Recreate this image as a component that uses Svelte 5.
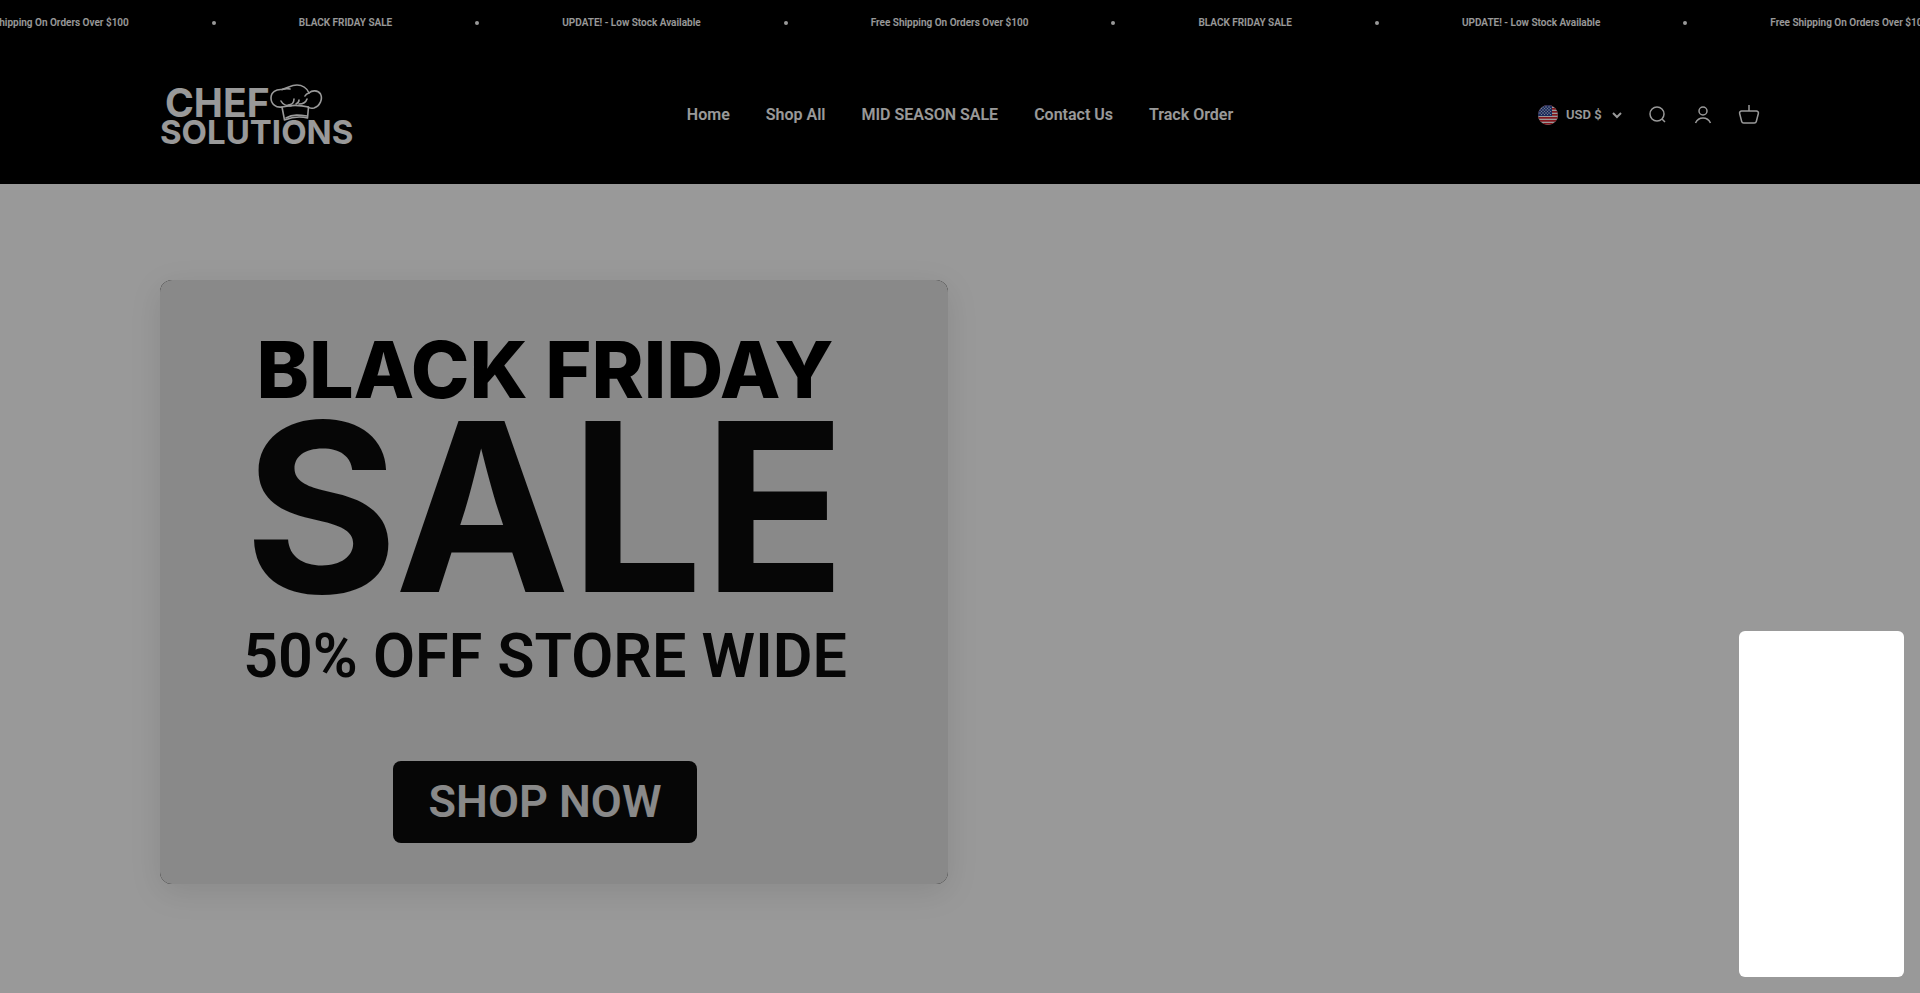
<script lang="ts">
    const announcements = [
        "Free Shipping On Orders Over $100",
        "BLACK FRIDAY SALE",
        "UPDATE! - Low Stock Available",
    ];

    const ticker = [...announcements, ...announcements, ...announcements];

    const links = [
        { label: "Home", href: "#home" },
        { label: "Shop All", href: "#shop-all" },
        { label: "MID SEASON SALE", href: "#mid-season-sale" },
        { label: "Contact Us", href: "#contact" },
        { label: "Track Order", href: "#track-order" },
    ];

    let scrolled = $state(29);
</script>

<div class="page">
    <div class="announcement-bar">
        <div class="track" style:transform={`translateX(-${scrolled}px)`}>
            {#each ticker as message}
                <span class="message">{message}</span>
                <span class="dot"></span>
            {/each}
        </div>
    </div>

    <header class="header">
        <div class="header-inner">
            <a class="logo" href="#home" aria-label="Chef Solutions">
                <svg width="194" height="62" viewBox="0 0 194 62">
                    <text class="logo-chef" x="5" y="33">CHEF</text>
                    <text class="logo-solutions" x="0" y="60">SOLUTIONS</text>
                    <g class="hat">
                        <path d="M122 23C116 24 111 20 111 14C111 8 116 5 122 5.500C128 4 131 1 137 1C142 1 147 4 149 9C152 6 158 6 160.500 10C163 15 160 22 154 24C151 24.500 149 24 148 23" />
                        <path d="M122 5.500C125 4.500 128 4.500 130 5M149 9C147 9.500 146 10 145 12" />
                        <path d="M121 17C123 21 127 22 131 22M134 15C134 18 132 21 128 21M139 20C143 20 146 18 147 15M136 20C138 19 139 18 139 16" />
                        <path d="M122 23L124.500 36C132 33 140 32 147.500 34L148.500 23C140 21 130 21 122 23Z" />
                        <path d="M126 34C133 30 140 31 147 32" />
                    </g>
                </svg>
            </a>

            <nav class="nav">
                {#each links as link}
                    <a href={link.href}>{link.label}</a>
                {/each}
            </nav>

            <div class="tools">
                <label class="currency">
                    <svg width="20" height="20" viewBox="0 0 20 20" aria-hidden="true">
                        <clipPath id="flag-clip"><circle cx="10" cy="10" r="10" /></clipPath>
                        <g clip-path="url(#flag-clip)">
                            <rect width="20" height="20" fill="#fff" />
                            {#each [0, 3, 6, 9, 12, 15, 18] as y}
                                <rect {y} width="20" height="1.700" fill="#d8242f" />
                            {/each}
                            <rect width="14" height="11" fill="#2c4a9e" />
                            {#each [2, 5, 8] as y}
                                {#each [2, 5, 8, 11] as x}
                                    <circle cx={x} cy={y} r=".7" fill="#fff" />
                                    <circle cx={x + 1.5} cy={y + 1.5} r=".5" fill="#fff" />
                                {/each}
                            {/each}
                        </g>
                    </svg>
                    <select aria-label="Currency">
                        <option>USD $</option>
                    </select>
                    <svg class="chevron" width="10" height="7" viewBox="0 0 10 7" aria-hidden="true">
                        <path d="m1 1 4 4 4-4" />
                    </svg>
                </label>
                <a class="icon" href="#search" aria-label="Search">
                    <svg width="22" height="22" viewBox="0 0 22 22">
                        <circle cx="11" cy="10" r="7" />
                        <path d="m16 15 3 3" />
                    </svg>
                </a>
                <a class="icon" href="#account" aria-label="Account">
                    <svg width="22" height="22" viewBox="0 0 22 22">
                        <circle cx="11" cy="7" r="4" />
                        <path d="M3.5 19c1.421-2.974 4.247-5 7.5-5s6.079 2.026 7.5 5" />
                    </svg>
                </a>
                <a class="icon" href="#cart" aria-label="Cart">
                    <svg width="22" height="22" viewBox="0 0 22 22">
                        <path d="M11 7H3.577A2 2 0 0 0 1.64 9.497l2.051 8A2 2 0 0 0 5.63 19H16.37a2 2 0 0 0 1.937-1.503l2.052-8A2 2 0 0 0 18.422 7H11Zm0 0V1" />
                    </svg>
                </a>
            </div>
        </div>
    </header>

    <main class="hero">
        <section class="poster">
            <div class="poster-face">
                <h2 class="event">BLACK FRIDAY</h2>
                <p class="sale">SALE</p>
                <p class="offer">50% OFF STORE WIDE</p>
                <a class="shop-now" href="#shop-all">SHOP NOW</a>
            </div>
        </section>
    </main>
</div>

<div class="backdrop"></div>
<div class="popup" role="dialog" aria-label="Newsletter"></div>

<style>
    :global(body) {
        margin: 0;
        background: #fff;
    }

    .page {
        min-height: 100vh;
        font-family: Roboto, "Liberation Sans", sans-serif;
        font-weight: 600;
        overflow-x: hidden;
    }

    .announcement-bar {
        background: #000;
        color: #fff;
        overflow: hidden;
    }

    .track {
        display: flex;
        align-items: center;
        gap: 83px;
        width: max-content;
        height: 46px;
    }

    .message {
        font-size: 10px;
        line-height: 16px;
        white-space: nowrap;
    }

    .dot {
        width: 4px;
        height: 4px;
        border-radius: 50%;
        background: #fff;
    }

    .header {
        background: #000;
        color: #fff;
    }

    .header-inner {
        display: grid;
        grid-template-columns: 1fr auto 1fr;
        align-items: center;
        width: min(1600px, 100% - 96px);
        height: 138px;
        margin: 0 auto;
    }

    .header a {
        color: inherit;
        text-decoration: none;
    }

    .logo svg {
        display: block;
        fill: #fff;
        font-family: Inter, sans-serif;
        font-weight: 700;
    }

    .logo-chef {
        font-size: 39px;
    }

    .logo-solutions {
        font-size: 33px;
    }

    .hat {
        fill: none;
        stroke: #fff;
        stroke-width: 1.600;
        stroke-linecap: round;
        stroke-linejoin: round;
    }

    .nav {
        display: flex;
        gap: 36px;
        font-size: 16px;
        line-height: 24px;
        white-space: nowrap;
    }

    .tools {
        display: flex;
        align-items: center;
        justify-content: flex-end;
        gap: 24px;
    }

    .currency {
        display: flex;
        align-items: center;
        gap: 8px;
    }

    .currency select {
        appearance: none;
        padding: 0;
        border: 0;
        background: none;
        color: inherit;
        font: inherit;
        font-size: 13px;
        line-height: 20px;
        cursor: pointer;
    }

    .chevron {
        margin-left: 2px;
        fill: none;
        stroke: currentColor;
        stroke-width: 2;
    }

    .icon svg {
        display: block;
        fill: none;
        stroke: currentColor;
        stroke-width: 1.500;
    }

    .hero {
        display: grid;
        grid-template-columns: 1fr 1fr;
        gap: 24px;
        width: min(1600px, 100% - 96px);
        margin: 0 auto;
        padding-top: 96px;
    }

    .poster {
        border-radius: 12px;
        background: #000;
        box-shadow: 0 8px 32px rgba(0, 0, 0, 0.1);
    }

    .poster-face {
        display: flex;
        flex-direction: column;
        align-items: center;
        padding: 59px 18px 41px 0;
        border-radius: 12px;
        background: #e4e4e4;
        color: #0a0a0a;
        font-family: Roboto, sans-serif;
        font-weight: 600;
        white-space: nowrap;
    }

    .event,
    .sale,
    .offer {
        margin: 0;
    }

    .event {
        margin-bottom: 22px;
        color: #000;
        font-family: Inter, sans-serif;
        font-size: 79px;
        font-weight: 800;
        line-height: 60px;
    }

    .sale {
        margin-bottom: 39px;
        font-family: Inter, sans-serif;
        font-size: 235px;
        font-weight: 700;
        line-height: 172px;
    }

    .offer {
        margin-bottom: 81px;
        font-size: 61px;
        line-height: 48px;
    }

    .shop-now {
        padding: 0 36px;
        border-radius: 8px;
        background: #0a0a0a;
        color: #e4e4e4;
        font-size: 45px;
        line-height: 82px;
        text-decoration: none;
    }

    .backdrop {
        position: fixed;
        inset: 0;
        background: rgba(0, 0, 0, 0.4);
    }

    .popup {
        position: fixed;
        right: 16px;
        bottom: 16px;
        width: 165px;
        height: 346px;
        border-radius: 6px;
        background: #fff;
    }
</style>
